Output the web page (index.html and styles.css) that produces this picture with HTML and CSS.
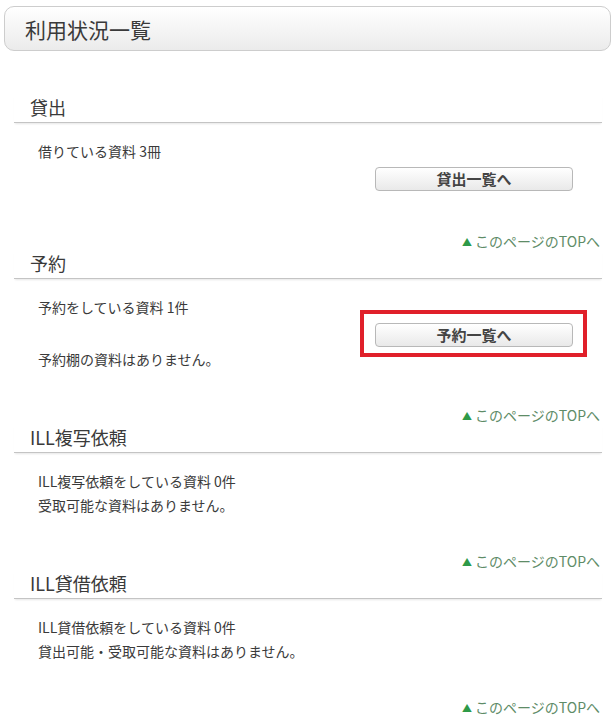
FILE: index.html
```html
<!DOCTYPE html>
<html lang="ja">
<head>
<meta charset="utf-8">
<title>利用状況一覧</title>
<link rel="stylesheet" href="styles.css">
</head>
<body>
<div class="page">
  <h1 class="page-title">利用状況一覧</h1>

  <section class="block block-first">
    <h2 class="block-head">貸出</h2>
    <div class="block-body">
      <p class="line">借りている資料 3冊</p>
      <div class="btn-row btn-row-last"><button class="btn">貸出一覧へ</button></div>
    </div>
    <div class="to-top"><span class="tri">▲</span> このページのTOPへ</div>
  </section>

  <section class="block">
    <h2 class="block-head">予約</h2>
    <div class="block-body">
      <p class="line">予約をしている資料 1件</p>
      <div class="btn-row"><button class="btn btn-marked">予約一覧へ<span class="mark"></span></button></div>
      <p class="line">予約棚の資料はありません。</p>
    </div>
    <div class="to-top"><span class="tri">▲</span> このページのTOPへ</div>
  </section>

  <section class="block">
    <h2 class="block-head">ILL複写依頼</h2>
    <div class="block-body">
      <p class="line">ILL複写依頼をしている資料 0件</p>
      <p class="line">受取可能な資料はありません。</p>
    </div>
    <div class="to-top"><span class="tri">▲</span> このページのTOPへ</div>
  </section>

  <section class="block">
    <h2 class="block-head">ILL貸借依頼</h2>
    <div class="block-body">
      <p class="line">ILL貸借依頼をしている資料 0件</p>
      <p class="line">貸出可能・受取可能な資料はありません。</p>
    </div>
    <div class="to-top"><span class="tri">▲</span> このページのTOPへ</div>
  </section>
</div>
</body>
</html>
```

FILE: styles.css
```css
html, body {
  margin: 0;
  padding: 0;
  background: #ffffff;
}

body {
  font-family: "Noto Sans CJK JP", "Noto Sans", sans-serif;
  color: #3a3a3a;
}

.page {
  padding: 6px 5px 0 4px;
}

.page-title {
  margin: 0;
  height: 43px;
  display: flex;
  align-items: center;
  padding-left: 20px;
  border: 1px solid #cdcdcd;
  border-radius: 10px;
  background: linear-gradient(#ffffff, #ebebeb);
  font-size: 21px;
  font-weight: normal;
  color: #3a3a3a;
}

.block {
  margin: 0 9px 0 10px;
}

.block-first {
  margin-top: 44px;
}

.block-head {
  margin: 0;
  padding: 0 0 3px 16px;
  height: 24px;
  font-size: 18px;
  line-height: 24px;
  font-weight: normal;
  color: #3a3a3a;
  border-bottom: 1px solid #c4c4c4;
  box-shadow: 0 2px 2px -1px #e6e6e6;
}

.block-body {
  padding: 16px 0 0 24px;
}

.line {
  margin: 0;
  height: 24px;
  font-size: 14px;
  line-height: 24px;
  color: #3a3a3a;
}

.btn-row {
  display: flex;
  justify-content: flex-end;
  padding: 4px 29px 0 0;
}

.btn-row-last {
  padding-bottom: 6px;
}

.btn {
  position: relative;
  width: 198px;
  height: 24px;
  padding: 0;
  border: 1px solid #b8b8b8;
  border-radius: 4px;
  background: linear-gradient(#ffffff, #e9e9e9);
  font-family: "Noto Sans CJK JP", sans-serif;
  font-size: 15px;
  font-weight: bold;
  color: #444444;
  line-height: 22px;
}

.mark {
  position: absolute;
  left: -16px;
  right: -15px;
  top: -14px;
  bottom: -11px;
  border: 4px solid #e0202a;
}

.to-top {
  margin-top: 34px;
  padding-right: 2px;
  height: 20px;
  text-align: right;
  font-size: 14px;
  line-height: 20px;
  color: #5e8c67;
}

.tri {
  color: #2e9a48;
  font-size: 10px;
  line-height: 1;
  vertical-align: 1px;
}
```
